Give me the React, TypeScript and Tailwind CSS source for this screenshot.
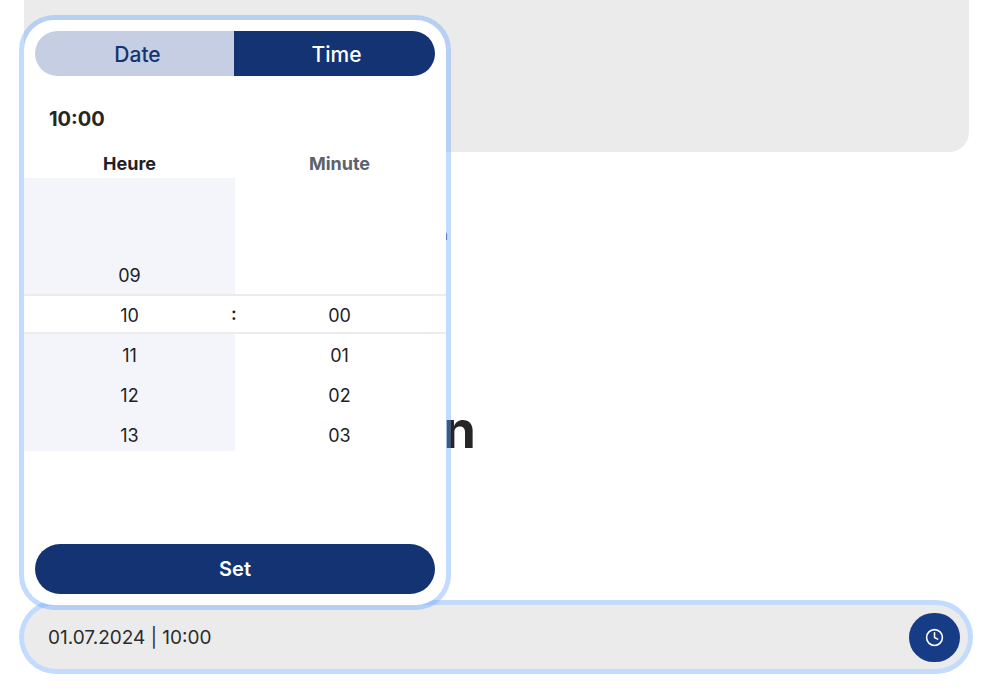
import React from 'react';
import { Clock } from 'lucide-react';

const HOURS = ['09', '', '11', '12', '13'];
const MINUTES = ['', '', '01', '02', '03'];

function TimeColumn({ items, shaded }: { items: string[]; shaded?: boolean }) {
  return (
    <div className={`w-1/2 pt-[77px] ${shaded ? 'bg-[#f3f5fa]' : 'pr-0.5'}`}>
      {items.map((item, i) => (
        <div key={i} className="h-10 flex items-center justify-center text-[18px] text-[#1f2126]">
          {item}
        </div>
      ))}
    </div>
  );
}

export default function App() {
  return (
    <div className="relative h-[690px] w-[987px] overflow-hidden bg-white font-['Inter',sans-serif]">
      <div className="h-[152px] ml-6 w-[945px] bg-[#ebebeb] rounded-b-[20px]" />

      <p className="mt-[73px] pr-[539px] text-right text-[14px] leading-5 text-[#555b63]">
        Choisissez votre réservation
      </p>

      <h2 className="mt-[157px] pr-[511px] text-right text-[52px] leading-[56px] font-bold text-[#262626]">
        Plan
      </h2>

      {/* Date field */}
      <div className="mt-[147px] ml-6 w-[944px] h-[64px] rounded-[32px] bg-[#ebebeb] ring-[5px] ring-[#66a5ff]/40 flex items-center justify-between pl-[24px] pr-2">
        <span className="pt-0.5 text-[19px] text-[#2b2b2b]">01.07.2024 | 10:00</span>
        <button className="w-[51px] h-[49px] rounded-full bg-[#163c85] flex items-center justify-center text-white">
          <Clock size={19} strokeWidth={2} />
        </button>
      </div>

      {/* Picker popover */}
      <div className="absolute left-6 top-5 w-[422px] h-[585px] rounded-[30px] bg-white ring-[5px] ring-[#66a5ff]/40 flex flex-col">
        <div className="mx-[11px] mt-[11px] h-[45px] flex rounded-full overflow-hidden text-[21px] font-medium">
          <div className="w-[199px] pl-1.5 pt-0.5 bg-[#c5cee2] text-[#133372] flex items-center justify-center">Date</div>
          <div className="flex-1 pl-1 pt-0.5 bg-[#133372] text-white flex items-center justify-center">Time</div>
        </div>

        <div className="mt-[29px] pl-[25px] text-[20px] leading-[28px] font-bold text-[#262626]">10:00</div>

        <div className="mt-[20px] flex text-[18px] leading-[22px] font-bold">
          <div className="w-1/2 text-center text-[#1f2126]">Heure</div>
          <div className="w-1/2 pr-0.5 text-center text-[#5b626b]">Minute</div>
        </div>

        <div className="relative mt-[3px] h-[273px] overflow-hidden flex">
          <TimeColumn items={HOURS} shaded />
          <TimeColumn items={MINUTES} />
          <div className="absolute left-0 right-0 top-[116px] h-10 pt-0.5 bg-white border-y-2 border-[#ececec] flex text-[18px] text-[#1f2126]">
            <div className="w-1/2 flex items-center justify-center">10</div>
            <div className="w-1/2 pr-0.5 flex items-center justify-center">00</div>
            <span className="absolute left-1/2 top-[6px] -translate-x-[4px] leading-6 font-semibold">:</span>
          </div>
        </div>

        <button className="mx-[11px] mt-auto mb-[11px] h-[50px] rounded-full bg-[#133372] text-white text-[20px] font-semibold">
          Set
        </button>
      </div>
    </div>
  );
}
